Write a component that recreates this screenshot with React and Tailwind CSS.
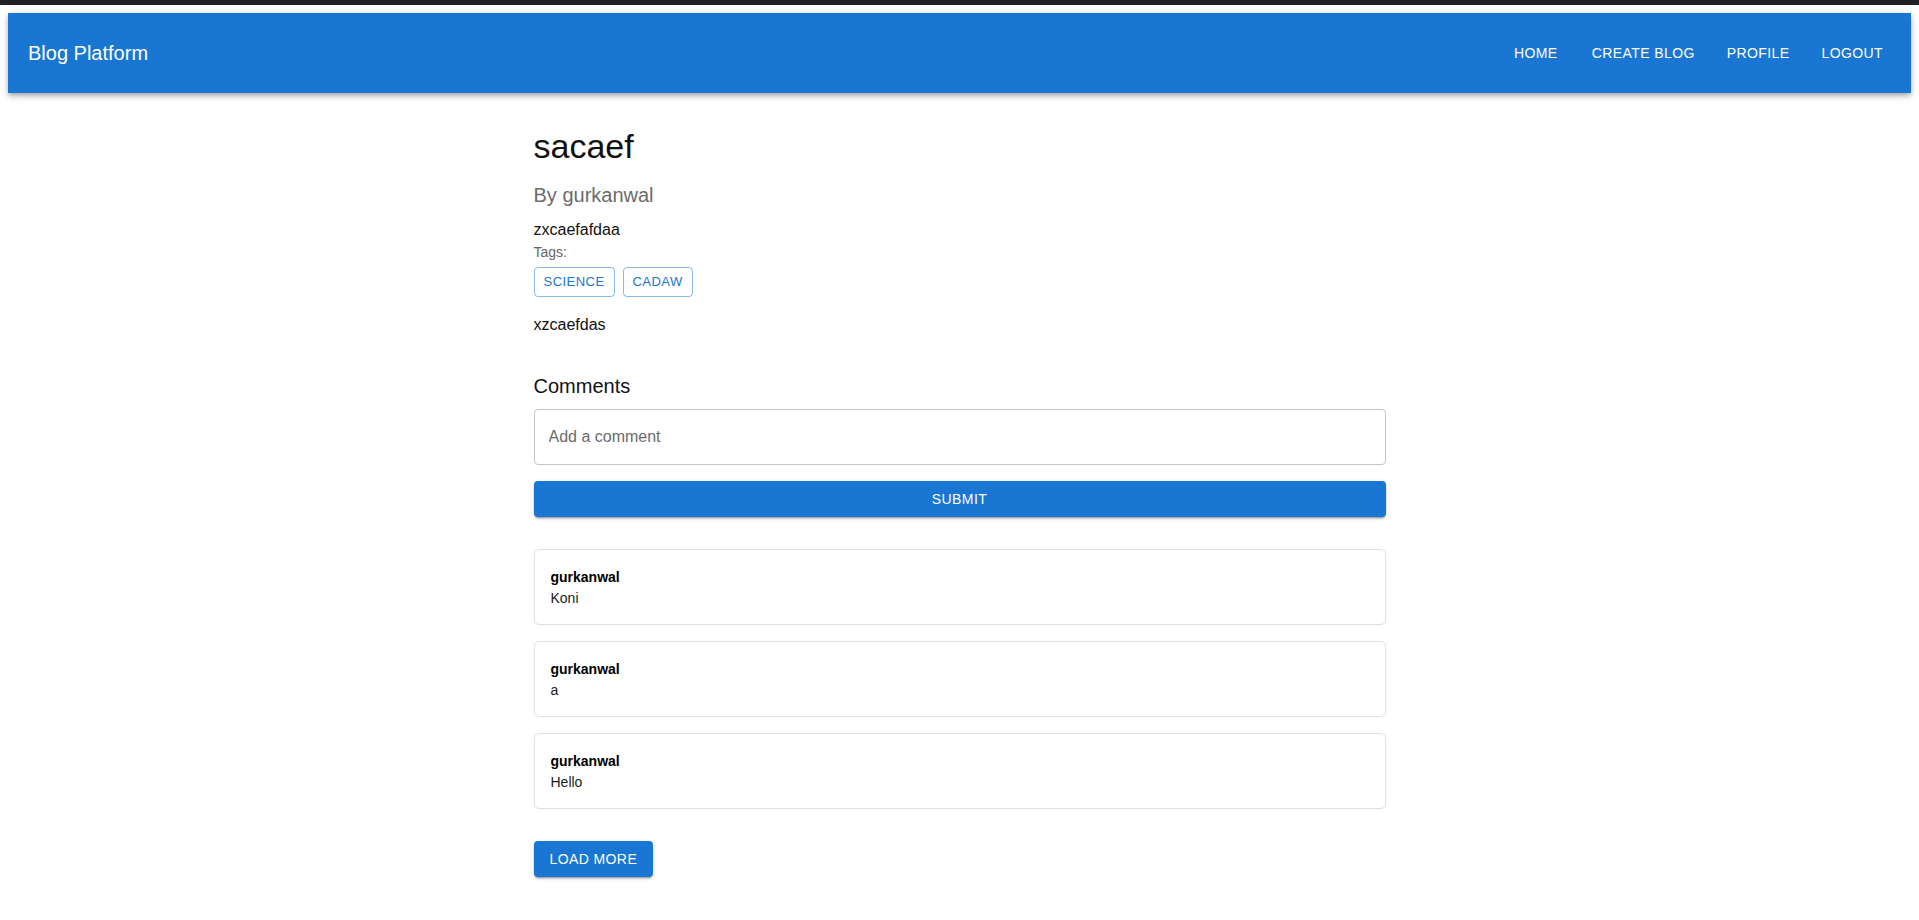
import React from "react";

const comments = [
  { id: 1, author: "gurkanwal", text: "Koni" },
  { id: 2, author: "gurkanwal", text: "a" },
  { id: 3, author: "gurkanwal", text: "Hello" },
];

const tags = ["SCIENCE", "CADAW"];

const navLinks = ["HOME", "CREATE BLOG", "PROFILE", "LOGOUT"];

const raised =
  "shadow-[0px_3px_1px_-2px_rgba(0,0,0,0.2),0px_2px_2px_0px_rgba(0,0,0,0.14),0px_1px_5px_0px_rgba(0,0,0,0.12)]";

const Navbar = () => (
  <header className="mx-2 h-[80px] bg-[#1976d2] text-white flex items-center pl-5 pr-5 shadow-[0px_2px_4px_-1px_rgba(0,0,0,0.2),0px_4px_5px_0px_rgba(0,0,0,0.14),0px_1px_10px_0px_rgba(0,0,0,0.12)]">
    <h1 className="text-[20px] leading-[32px] font-normal flex-1">Blog Platform</h1>
    <nav className="flex items-center gap-4">
      {navLinks.map((link) => (
        <button
          key={link}
          className="min-w-[64px] px-2 py-[6px] text-[14px] leading-[24px] tracking-[0.4px] rounded"
        >
          {link}
        </button>
      ))}
    </nav>
  </header>
);

const CommentCard = ({ author, text }) => (
  <div className="border border-[#e0e0e0] rounded-[5px] p-4 mb-4 bg-white">
    <p className="text-[14px] leading-[22px] font-bold text-black">{author}</p>
    <p className="text-[14px] leading-[20px] text-[#212121]">{text}</p>
  </div>
);

export default function App() {
  return (
    <div className="min-h-screen bg-white font-['Liberation_Sans',Arial,sans-serif]">
      <div className="h-[5px] bg-[#202124]" />
      <div className="pt-2">
        <Navbar />

        <main className="max-w-[900px] mx-auto px-6 mt-8 pb-10">
          {/* Post */}
          <h2 className="text-[34px] leading-[42px] text-[#111] mb-[12px]">sacaef</h2>
          <h3 className="text-[20px] leading-[32px] text-[#6b6b6b] mb-[7px]">By gurkanwal</h3>
          <p className="text-[16px] leading-[24px] text-[#111]">zxcaefafdaa</p>
          <p className="text-[14px] leading-[20px] text-[#666]">Tags:</p>
          <div className="flex gap-2 mt-[5px]">
            {tags.map((tag) => (
              <button
                key={tag}
                className="min-w-[64px] h-[30px] px-[9px] border border-[rgba(25,118,210,0.5)] rounded text-[#1976d2] text-[13px] tracking-[0.46px]"
              >
                {tag}
              </button>
            ))}
          </div>
          <p className="text-[16px] leading-[24px] text-[#111] mt-4">xzcaefdas</p>

          {/* Comments */}
          <h3 className="text-[20px] leading-[32px] text-[#111] mt-[33px] mb-[7px]">Comments</h3>
          <input
            type="text"
            placeholder="Add a comment"
            className="w-full h-[56px] px-[14px] border border-[#c4c4c4] rounded text-[16px] outline-none placeholder:text-[#6b6b6b]"
          />
          <button
            className={`w-full h-[36px] mt-4 bg-[#1976d2] text-white text-[14px] tracking-[0.4px] rounded ${raised}`}
          >
            SUBMIT
          </button>

          <div className="mt-8">
            {comments.map((c) => (
              <CommentCard key={c.id} author={c.author} text={c.text} />
            ))}
          </div>

          <button
            className={`mt-4 h-[36px] px-4 bg-[#1976d2] text-white text-[14px] tracking-[0.4px] rounded ${raised}`}
          >
            LOAD MORE
          </button>
        </main>
      </div>
    </div>
  );
}
